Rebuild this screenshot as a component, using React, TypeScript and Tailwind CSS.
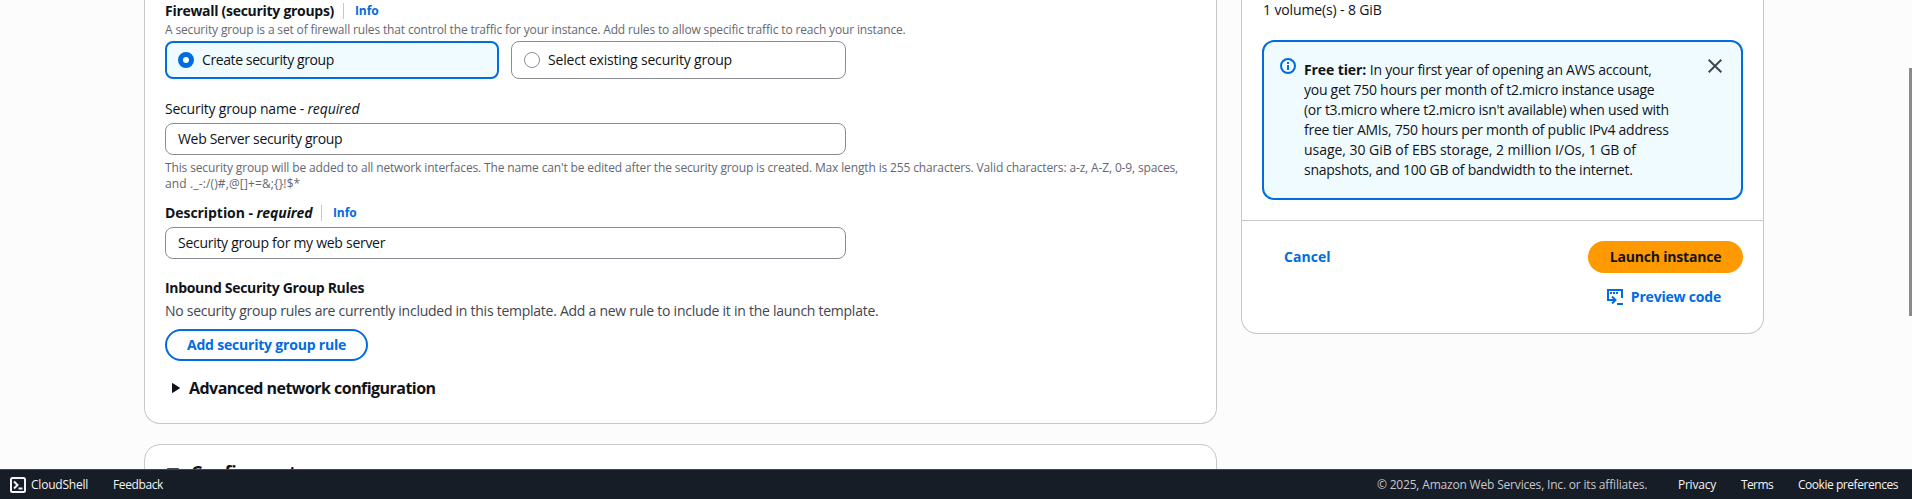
import React from 'react';

function InfoLink() {
  return <a className="block text-[12px] leading-5 font-bold tracking-[-0.1px] text-[#006ce0]">Info</a>;
}

function Divider() {
  return <span className="h-4 w-px bg-[#c6c6cd]" />;
}

function TextField({ value, tracking }: { value: string; tracking: string }) {
  return (
    <div className={'flex h-8 w-[681px] items-center rounded-lg border border-[#8c8c94] bg-white px-3 text-sm ' + tracking}>
      {value}
    </div>
  );
}

function FirewallCard() {
  return (
    <section className="h-[424px] w-[1073px] rounded-b-2xl border border-t-0 border-[#c6c6cd] bg-white pt-px pl-5">
      <div className="flex h-5 items-center text-sm leading-5">
        <span className="w-[178px] font-bold tracking-[-0.29px]">Firewall (security groups)</span>
        <Divider />
        <span className="pl-[11px]">
          <InfoLink />
        </span>
      </div>
      <p className="pt-px text-xs leading-4 tracking-[-0.152px] text-[#656871]">
        A security group is a set of firewall rules that control the traffic for your instance. Add rules to allow
        specific traffic to reach your instance.
      </p>

      <div className="mt-[3px] flex gap-3 text-sm leading-5">
        <div className="flex h-[38px] w-[334px] items-center rounded-lg border-2 border-[#006ce0] bg-[#f0fbff] pl-[11px]">
          <span className="size-4 rounded-full border-5 border-[#006ce0] bg-white" />
          <span className="pl-2 tracking-[-0.4px]">Create security group</span>
        </div>
        <div className="flex h-[38px] w-[335px] items-center rounded-lg border border-[#8c8c94] pl-3">
          <span className="size-4 rounded-full border border-[#8c8c94] bg-white" />
          <span className="pl-2 tracking-[-0.19px]">Select existing security group</span>
        </div>
      </div>

      <div className="mt-5 h-5 text-sm leading-5 tracking-[-0.22px]">
        Security group name - <i className="tracking-[-0.1px]">required</i>
      </div>
      <div className="mt-1">
        <TextField value="Web Server security group" tracking="tracking-[-0.31px]" />
      </div>
      <p className="mt-[5px] text-xs leading-4 text-[#656871]">
        <span className="tracking-[-0.14px]">
          This security group will be added to all network interfaces. The name can't be edited after the security group
          is created. Max length is 255 characters. Valid characters: a-z, A-Z, 0-9, spaces,
        </span>
        <br />
        <span className="tracking-[0.13px]">{'and ._-:/()#,@[]+=&;{}!$*'}</span>
      </p>

      <div className="mt-[11px] flex h-5 items-center text-sm leading-5 font-bold">
        <span className="w-[156px] tracking-[-0.06px]">
          Description - <i>required</i>
        </span>
        <Divider />
        <span className="pl-[11px]">
          <InfoLink />
        </span>
      </div>
      <div className="mt-1">
        <TextField value="Security group for my web server" tracking="tracking-[-0.28px]" />
      </div>

      <h3 className="mt-[19px] text-sm leading-5 font-bold tracking-[-0.31px]">Inbound Security Group Rules</h3>
      <p className="mt-[3px] text-sm leading-5 tracking-[-0.26px] text-[#424650]">
        No security group rules are currently included in this template. Add a new rule to include it in the launch
        template.
      </p>
      <button className="mt-2 flex h-8 w-[203px] items-center justify-center rounded-full border-2 border-[#006ce0] text-sm font-bold tracking-[-0.2px] text-[#006ce0]">
        Add security group rule
      </button>

      <div className="mt-[17px] flex items-center pl-[7px] text-base leading-5 font-bold tracking-[-0.54px]">
        <svg width="8" height="10" viewBox="0 0 8 10" className="mr-[9px]">
          <path d="M0.5 0.5 7.5 5 0.5 9.5Z" fill="#0f141a" stroke="#0f141a" strokeLinejoin="round" />
        </svg>
        Advanced network configuration
      </div>
    </section>
  );
}

function StorageCard() {
  return (
    <section className="mt-5 flex h-[120px] w-[1073px] items-start rounded-2xl border border-[#c6c6cd] bg-white pt-[15px] pr-5 pl-[22px]">
      <svg width="12" height="8" viewBox="0 0 12 8" className="mt-[8px]">
        <path d="M0.5 0.5H11.5L6 7.5Z" fill="#424650" stroke="#424650" strokeLinejoin="round" />
      </svg>
      <h2 className="ml-3 text-lg leading-6 font-bold tracking-[-0.3px]">Configure storage</h2>
      <a className="mt-[5px] ml-auto text-sm leading-5 font-bold tracking-[-0.2px] text-[#006ce0]">Advanced</a>
    </section>
  );
}

function FreeTierAlert() {
  return (
    <div className="mt-5 flex h-[160px] w-[481px] rounded-xl border-2 border-[#006ce0] bg-[#f0fbff]">
      <svg width="16" height="16" viewBox="0 0 16 16" className="mt-4 ml-4 shrink-0" fill="none" stroke="#006ce0" strokeWidth="2">
        <circle cx="8" cy="8" r="7" />
        <path d="M8 7v5M8 4v2" />
      </svg>
      <p className="mt-[18px] ml-2 w-[380px] text-sm leading-5 whitespace-nowrap">
        <b className="tracking-[-0.1px]">Free tier:</b>{' '}
        <span className="tracking-[-0.245px]">In your first year of opening an AWS account,</span>
        <br />
        <span className="tracking-[-0.275px]">you get 750 hours per month of t2.micro instance usage</span>
        <br />
        <span className="tracking-[-0.258px]">(or t3.micro where t2.micro isn't available) when used with</span>
        <br />
        <span className="tracking-[-0.262px]">free tier AMIs, 750 hours per month of public IPv4 address</span>
        <br />
        <span className="tracking-[-0.035px]">usage, 30 GiB of EBS storage, 2 million I/Os, 1 GB of</span>
        <br />
        <span className="tracking-[-0.255px]">snapshots, and 100 GB of bandwidth to the internet.</span>
      </p>
      <svg width="14" height="14" viewBox="0 0 14 14" className="mt-[17px] ml-6 shrink-0" fill="none" stroke="#424650" strokeWidth="2">
        <path d="M0.7 0.7 13.3 13.3M13.3 0.7 0.7 13.3" />
      </svg>
    </div>
  );
}

function SummaryPanel() {
  return (
    <aside className="ml-6 h-[334px] w-[523px] rounded-b-2xl border border-t-0 border-[#c6c6cd] bg-white">
      <div className="h-[220px] pl-5">
        <div className="pl-px text-sm leading-5 tracking-[-0.13px]">1 volume(s) - 8 GiB</div>
        <FreeTierAlert />
      </div>
      <div className="flex justify-between border-t border-[#c6c6cd] pt-5 pr-5 pl-[42px] text-sm font-bold text-[#006ce0]">
        <button className="h-8 tracking-[0.05px]">Cancel</button>
        <div className="flex flex-col items-end gap-2">
          <button className="h-8 w-[155px] rounded-full bg-[#ff9900] tracking-[-0.2px] text-[#0f141a]">
            Launch instance
          </button>
          <button className="flex h-8 items-center pr-[22px] tracking-[-0.2px]">
            <svg width="16" height="16" viewBox="0 0 16 16" className="mr-2" fill="none" stroke="#006ce0" strokeWidth="2">
              <path d="M15 9V1H1v10h7M5 7.5 8.5 11 5 14.5M10 15h6" />
              <path d="M3 4h2M6 4h2M9 4h2" />
            </svg>
            Preview code
          </button>
        </div>
      </div>
    </aside>
  );
}

function FooterBar() {
  return (
    <footer className="flex h-[30px] shrink-0 items-center border-t border-[#424650] bg-[#161d26] pt-[3px] pr-[14px] pb-[2px] pl-[10px] text-xs leading-4 text-[#f3f3f7]">
      <svg width="16" height="16" viewBox="0 0 16 16" fill="none" stroke="#f3f3f7" strokeWidth="2">
        <rect x="1" y="1" width="14" height="14" rx="1.5" />
        <path d="M4 4.5 7.5 8 4 11.5M8.5 11.5H12.5" />
      </svg>
      <span className="w-[82px] pl-[5px] tracking-[-0.224px]">CloudShell</span>
      <span className="pl-[5px] tracking-[-0.38px]">Feedback</span>
      <div className="ml-auto flex">
        <span className="w-[301px] tracking-[-0.185px] text-[#c6c6cd]">© 2025, Amazon Web Services, Inc. or its affiliates.</span>
        <span className="w-[63px] tracking-[-0.225px]">Privacy</span>
        <span className="w-[57px] tracking-[-0.6px]">Terms</span>
        <span className="tracking-[-0.45px]">Cookie preferences</span>
      </div>
    </footer>
  );
}

export default function App() {
  return (
    <div className="relative flex h-[499px] w-[1912px] flex-col overflow-hidden bg-[#fcfcfd] font-['Open_Sans','Noto_Sans',sans-serif] text-[#0f141a]">
      <main className="flex h-[469px] shrink-0 items-start overflow-hidden pl-[144px]">
        <div>
          <FirewallCard />
          <StorageCard />
        </div>
        <SummaryPanel />
      </main>
      <FooterBar />
      <div className="absolute top-[68px] right-0 h-[248px] w-[3px] bg-[#8b8b8b]" />
    </div>
  );
}
